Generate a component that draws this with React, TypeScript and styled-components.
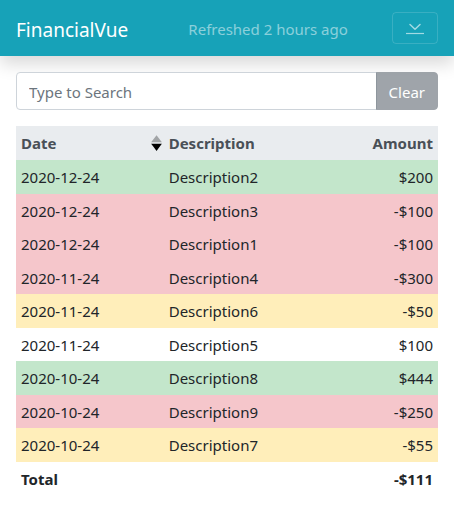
import React, { useState } from "react";
import styled, { createGlobalStyle } from "styled-components";

const GlobalStyle = createGlobalStyle`
  *, *::before, *::after { box-sizing: border-box; }
  body {
    margin: 0;
    background: #fff;
    color: #212529;
    font-family: "Segoe UI", "Noto Sans", sans-serif;
    font-size: 15px;
    line-height: 24px;
  }
  button, input { font: inherit; }
`;

const Navbar = styled.header`
  display: flex;
  align-items: center;
  justify-content: space-between;
  height: 56px;
  padding: 0 16px;
  background: #17a2b8;
  box-shadow: 0 8px 16px rgba(0, 0, 0, 0.15);
`;

const Brand = styled.a`
  margin-right: 16px;
  padding-top: 4px;
  color: #fff;
  font-size: 19px;
  text-decoration: none;
`;

const Refreshed = styled.span`
  padding-top: 2px;
  color: rgba(255, 255, 255, 0.5);
`;

const Toggler = styled.button`
  display: flex;
  align-items: center;
  justify-content: center;
  width: 46px;
  height: 32px;
  padding: 0;
  border: 1px solid rgba(255, 255, 255, 0.15);
  border-radius: 4px;
  background: transparent;
  color: rgba(255, 255, 255, 0.6);
`;

const Main = styled.main`
  padding: 16px;
`;

const SearchGroup = styled.form`
  display: flex;
  height: 38px;
  margin-bottom: 16px;
`;

const SearchInput = styled.input`
  flex: 1;
  min-width: 0;
  padding: 4px 12px 2px;
  border: 1px solid #ced4da;
  border-radius: 4px 0 0 4px;
  background: #fff;
  color: #495057;

  &::placeholder {
    color: #6c757d;
    opacity: 1;
  }
`;

const ClearButton = styled.button`
  margin-left: -1px;
  padding: 4px 12px 2px;
  border: 1px solid #6c757d;
  border-radius: 0 4px 4px 0;
  background: #6c757d;
  color: #fff;
  opacity: 0.65;
`;

const Table = styled.table`
  width: 100%;
  table-layout: fixed;
  border-collapse: collapse;
`;

const HeadCell = styled.th<{ $end?: boolean; $sortable?: boolean; $width: string }>`
  width: ${(p) => p.$width};
  padding: 5px ${(p) => (p.$sortable ? "2px" : "5px")} 5px 5px;
  background: #e9ecef;
  color: #495057;
  font-weight: 700;
  text-align: ${(p) => (p.$end ? "right" : "left")};
`;

const SortButton = styled.button`
  display: flex;
  align-items: center;
  justify-content: space-between;
  width: 100%;
  padding: 0;
  border: 0;
  background: transparent;
  color: inherit;
  font-weight: 700;
`;

type Tone = "success" | "danger" | "warning" | "plain";

const toneColor: Record<Tone, string> = {
  success: "#c3e6cb",
  danger: "#f5c6cb",
  warning: "#ffeeba",
  plain: "transparent",
};

const Row = styled.tr<{ $tone: Tone }>`
  background: ${(p) => toneColor[p.$tone]};

  &:nth-child(even) > td {
    padding-bottom: 4px;
  }
`;

const Cell = styled.td<{ $end?: boolean; $strong?: boolean }>`
  padding: 5px;
  font-weight: ${(p) => (p.$strong ? 700 : 400)};
  text-align: ${(p) => (p.$end ? "right" : "left")};
`;

interface Entry {
  date: string;
  description: string;
  amount: string;
  tone: Tone;
}

const entries: Entry[] = [
  { date: "2020-12-24", description: "Description2", amount: "$200", tone: "success" },
  { date: "2020-12-24", description: "Description3", amount: "-$100", tone: "danger" },
  { date: "2020-12-24", description: "Description1", amount: "-$100", tone: "danger" },
  { date: "2020-11-24", description: "Description4", amount: "-$300", tone: "danger" },
  { date: "2020-11-24", description: "Description6", amount: "-$50", tone: "warning" },
  { date: "2020-11-24", description: "Description5", amount: "$100", tone: "plain" },
  { date: "2020-10-24", description: "Description8", amount: "$444", tone: "success" },
  { date: "2020-10-24", description: "Description9", amount: "-$250", tone: "danger" },
  { date: "2020-10-24", description: "Description7", amount: "-$55", tone: "warning" },
];

const ChevronBarIcon = () => (
  <svg width="20" height="20" viewBox="0 0 20 20" fill="none" stroke="currentColor" aria-hidden="true">
    <path d="M5 6.5l5 4.8 5-4.8" strokeWidth="1.5" strokeLinecap="round" strokeLinejoin="round" />
    <path d="M1 15.5h18" strokeWidth="1.2" />
  </svg>
);

const SortIcon = () => (
  <svg width="11" height="16" viewBox="0 0 101 101" preserveAspectRatio="none" aria-hidden="true">
    <path fill="#000" opacity="0.3" d="M51 1l25 23 24 22H1l25-22z" />
    <path fill="#000" d="M51 101l25-23 24-22H1l25 22z" />
  </svg>
);

export default function App() {
  const [query, setQuery] = useState("");
  const needle = query.toLowerCase();
  const visible = entries.filter((e) =>
    `${e.date} ${e.description} ${e.amount}`.toLowerCase().includes(needle)
  );

  return (
    <>
      <GlobalStyle />
      <Navbar>
        <Brand href="#">FinancialVue</Brand>
        <Refreshed>Refreshed 2 hours ago</Refreshed>
        <Toggler type="button" aria-label="Toggle navigation">
          <ChevronBarIcon />
        </Toggler>
      </Navbar>
      <Main>
        <SearchGroup onSubmit={(e) => e.preventDefault()}>
          <SearchInput
            type="text"
            aria-label="Search"
            placeholder="Type to Search"
            value={query}
            onChange={(e) => setQuery(e.target.value)}
          />
          <ClearButton type="button" disabled={!query} onClick={() => setQuery("")}>
            Clear
          </ClearButton>
        </SearchGroup>
        <Table>
          <thead>
            <tr>
              <HeadCell scope="col" $width="35%" $sortable aria-sort="descending">
                <SortButton type="button">
                  Date
                  <SortIcon />
                </SortButton>
              </HeadCell>
              <HeadCell scope="col" $width="35%">Description</HeadCell>
              <HeadCell scope="col" $width="30%" $end>Amount</HeadCell>
            </tr>
          </thead>
          <tbody>
            {visible.map((e) => (
              <Row key={e.description} $tone={e.tone}>
                <Cell>{e.date}</Cell>
                <Cell>{e.description}</Cell>
                <Cell $end>{e.amount}</Cell>
              </Row>
            ))}
          </tbody>
          <tfoot>
            <Row $tone="plain">
              <Cell $strong colSpan={2}>Total</Cell>
              <Cell $strong $end>-$111</Cell>
            </Row>
          </tfoot>
        </Table>
      </Main>
    </>
  );
}
